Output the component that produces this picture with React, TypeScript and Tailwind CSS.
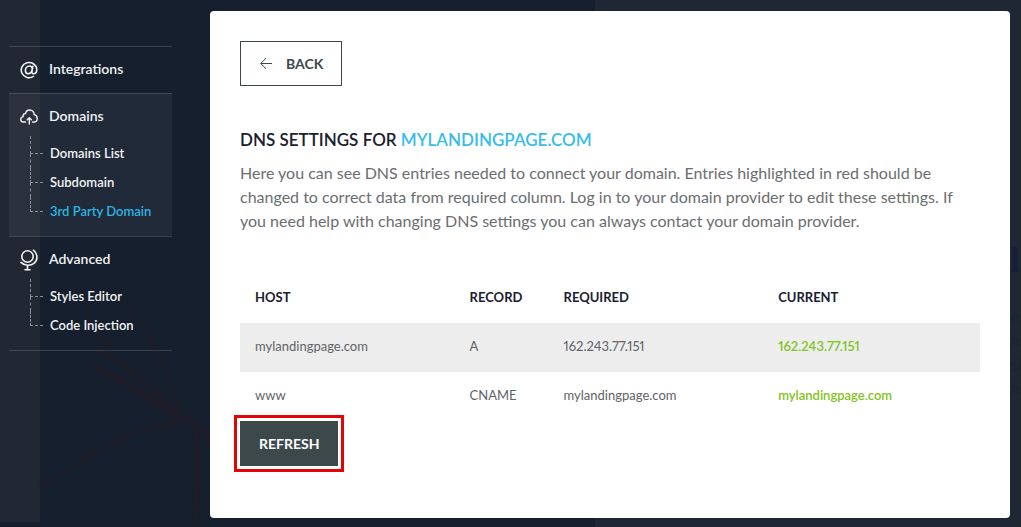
import type { ReactNode } from "react";

type Row = { host: string; record: string; required: string; current: string };

const rows: Row[] = [
  { host: "mylandingpage.com", record: "A", required: "162.243.77.151", current: "162.243.77.151" },
  { host: "www", record: "CNAME", required: "mylandingpage.com", current: "mylandingpage.com" },
];

function AtIcon() {
  return (
    <svg viewBox="0 0 18 18" className="size-[18px]" fill="none" stroke="currentColor" strokeWidth="1.6" strokeLinecap="round" aria-hidden="true">
      <path d="M13.4 15.4A7.8 7.6 0 1 1 16.8 8.2C16.8 11.2 15.2 12.7 13.5 12.7C11.9 12.7 11.6 11.5 11.9 10L12.9 5.2" />
      <path d="M12.4 7.4C12 5.8 10.9 5 9.5 5C7.2 5 5.4 7.1 5.4 9.6C5.4 11.5 6.5 12.7 8.1 12.7C10 12.7 11.6 11.4 12.1 9.4" />
    </svg>
  );
}

function CloudIcon() {
  return (
    <svg viewBox="0 0 18 16" className="h-4 w-[18px]" fill="none" stroke="currentColor" strokeWidth="1.4" strokeLinecap="round" strokeLinejoin="round" aria-hidden="true">
      <path d="M5.5 13H3.4C1.8 13 .8 11.9 .8 10.4C.8 8.9 1.9 7.8 3.2 7.6C2.7 5.9 3.8 4.4 5.5 4.5C6 2.3 7.6 1 9.7 1C12.3 1 14.2 2.9 14.1 5.6C16 6 17.2 7.5 17.2 9.4C17.2 11.5 15.8 13 13.7 13H12.5" />
      <path d="M9.3 15V9M7.2 10.8L9.3 8.8L11.4 10.8" />
    </svg>
  );
}

function GlobeIcon() {
  return (
    <svg viewBox="0 0 18 22" className="h-[22px] w-[18px]" fill="none" stroke="currentColor" strokeWidth="1.6" strokeLinecap="round" aria-hidden="true">
      <circle cx="7.5" cy="7.5" r="5.7" />
      <path d="M13.4 1.2C18.2 5 17.9 11.3 14 14.3C10.2 17.2 4.4 16.9 1 13.4" />
      <path d="M7.5 16.5V20.5M5 20.7H10" />
    </svg>
  );
}

function Backdrop() {
  return (
    <div className="absolute inset-0 -z-10 flex overflow-hidden bg-[#151f2d]" aria-hidden="true">
      <svg className="absolute bottom-0 left-0 h-[527px] w-[600px]" viewBox="0 0 600 527" fill="none" stroke="#1c1d28">
        <path d="M40 487C90 458 125 425 182 423" strokeWidth="4" />
        <path d="M92 364C115 382 145 390 180 421" strokeWidth="7" />
        <path d="M98 350C125 362 152 388 184 420" strokeWidth="6" />
        <path d="M182 421L172 388C164 368 158 350 148 334C132 306 105 282 92 296C80 310 94 338 116 350" strokeWidth="3" />
        <path d="M184 420C202 423 207 434 212 450M195 424C198 452 197 484 196 527" strokeWidth="6" />
      </svg>
      <div className="mb-[5px] w-10 bg-[#212733]" />
      <div className="w-[555px]" />
      <div className="flex flex-1 justify-end bg-[#202734]">
        <div className="w-[11px] overflow-hidden pt-[236px] whitespace-nowrap">
          <p className="font-['Liberation_Serif',serif] text-[36px] leading-[48px] font-bold text-[#152034]">le</p>
          <div className="pt-[21px] font-['Open_Sans',sans-serif] text-base leading-6 text-[#1b2232]">
            <p>er</p>
            <p>ar</p>
            <p>si</p>
            <p>ar</p>
          </div>
        </div>
      </div>
    </div>
  );
}

function SubItem({ children, active, last }: { children: ReactNode; active?: boolean; last?: boolean }) {
  return (
    <li className="group flex h-[29px]">
      <span className="flex w-[13px] shrink-0 flex-col group-first:-mt-[3px]" aria-hidden="true">
        <span className="h-[15px] border-b border-l border-dashed border-[#8a909a] group-first:h-[18px]" />
        {!last && <span className="flex-1 border-l border-dashed border-[#8a909a]" />}
      </span>
      <a href="#" className={`ml-[7px] text-[13px] leading-7 font-semibold ${active ? "text-[#2fb4e2]" : "text-[#f1f2f3]"}`}>
        {children}
      </a>
    </li>
  );
}

function Section({ icon, title, active, children }: { icon: ReactNode; title: string; active?: boolean; children?: ReactNode }) {
  return (
    <li className={`border-t border-white/15 pb-px ${active ? "bg-white/5" : ""}`}>
      <a href="#" className="flex h-[45px] items-center gap-[11px] pl-[11px] text-sm font-semibold text-[#f1f2f3]">
        {icon}
        <span className="pb-0.5">{title}</span>
      </a>
      {children && <ul className="pb-[9px] pl-[21px]">{children}</ul>}
    </li>
  );
}

export default function App() {
  return (
    <div className="relative isolate flex min-h-screen items-start pt-[11px] pr-[11px] pb-[9px] font-['Lato',sans-serif]">
      <Backdrop />
      <nav className="mt-[35px] mr-[38px] ml-[9px] w-[163px] shrink-0" aria-label="Settings">
        <ul className="border-b border-white/15">
          <Section icon={<AtIcon />} title="Integrations" />
          <Section icon={<CloudIcon />} title="Domains" active>
            <SubItem>Domains List</SubItem>
            <SubItem>Subdomain</SubItem>
            <SubItem active last>3rd Party Domain</SubItem>
          </Section>
          <Section icon={<GlobeIcon />} title="Advanced">
            <SubItem>Styles Editor</SubItem>
            <SubItem last>Code Injection</SubItem>
          </Section>
        </ul>
      </nav>

      <main className="min-w-0 flex-1 rounded bg-white px-[30px] pt-[30px] pb-[52px]">
        <button type="button" className="flex h-[45px] items-center gap-3.5 border border-[#3d484b] pr-[18px] pl-[19px] text-sm font-bold text-[#3d484b]">
          <svg viewBox="0 0 12 11" className="h-[11px] w-3" fill="none" stroke="currentColor" strokeWidth="1" aria-hidden="true">
            <path d="M12 5.5H.7M6 .3L.7 5.5L6 10.7" />
          </svg>
          BACK
        </button>

        <h1 className="mt-[42px] text-[17px] leading-6 font-semibold text-[#1a2030]">
          DNS SETTINGS FOR <span className="text-[#38bdeb]">MYLANDINGPAGE.COM</span>
        </h1>
        <p className="mt-[9px] text-base leading-6 text-[#6b6d70]">
          Here you can see DNS entries needed to connect your domain. Entries highlighted in red should be changed to
          correct data from required column. Log in to your domain provider to edit these settings. If you need help
          with changing DNS settings you can always contact your domain provider.
        </p>

        <table className="mt-10 w-full table-fixed text-left text-[13px] proportional-nums">
          <thead>
            <tr className="h-[50px] text-[#1a2030]">
              <th className="w-[29%] pl-[15px] font-bold">HOST</th>
              <th className="w-[12.7%] pl-[15px] font-bold">RECORD</th>
              <th className="w-[29%] pl-[15px] font-bold">REQUIRED</th>
              <th className="pl-[15px] font-bold">CURRENT</th>
            </tr>
          </thead>
          <tbody>
            {rows.map((row) => (
              <tr key={row.host} className="h-[49px] text-[#5f6368] odd:bg-[#ededed]">
                <td className="pb-0.5 pl-[15px]">{row.host}</td>
                <td className="pb-0.5 pl-[15px]">{row.record}</td>
                <td className="pb-0.5 pl-[15px]">{row.required}</td>
                <td className="pb-0.5 pl-[15px] font-semibold text-[#82c41c]">{row.current}</td>
              </tr>
            ))}
          </tbody>
        </table>

        <button type="button" className="h-[45px] bg-[#3d484b] pr-[18px] pl-[19px] text-sm font-bold text-white outline-3 outline-offset-3 outline-[#e30505]">
          REFRESH
        </button>
      </main>
    </div>
  );
}
